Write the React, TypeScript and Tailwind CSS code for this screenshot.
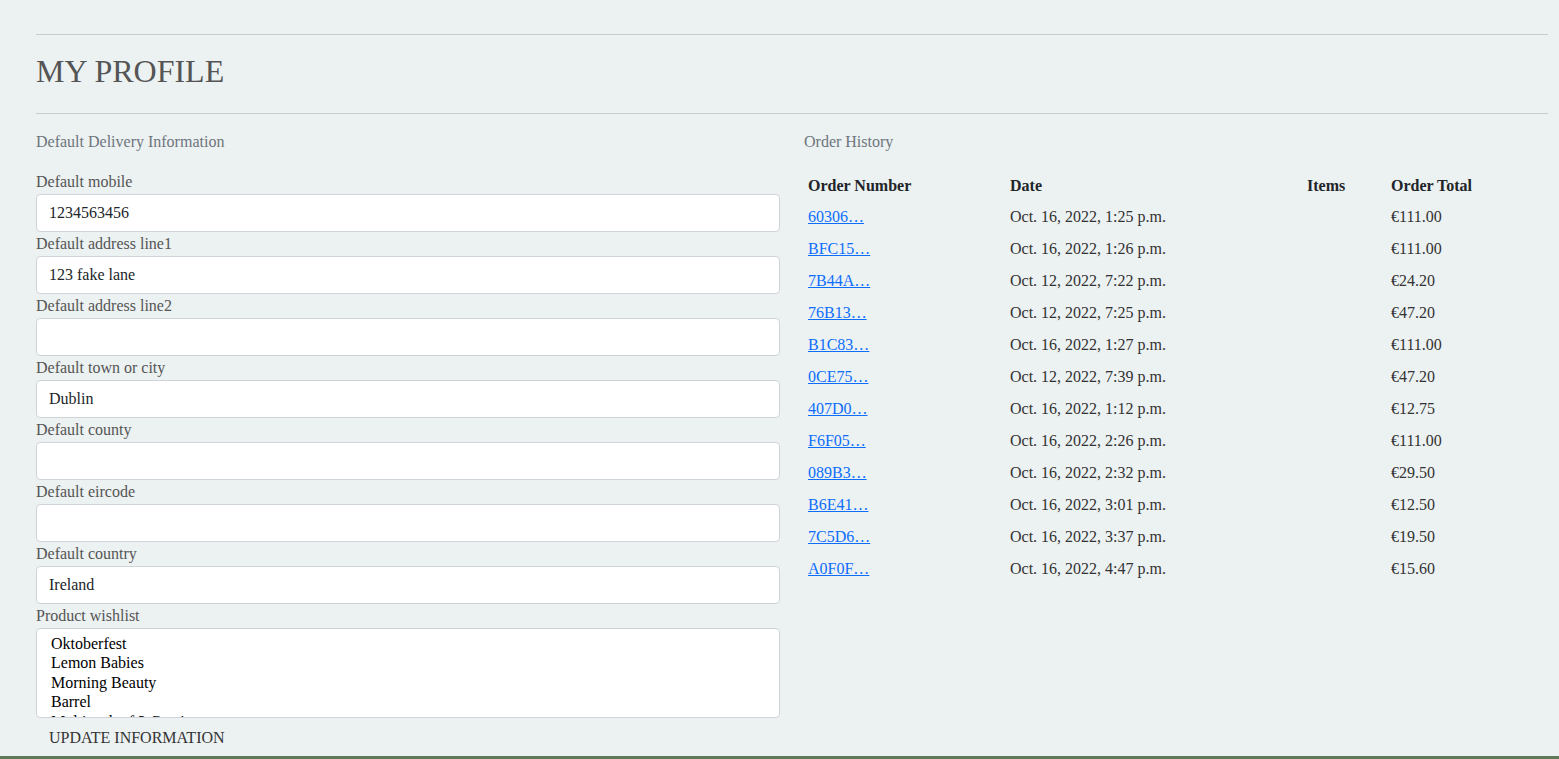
const fields = [
  { label: "Default mobile", value: "1234563456" },
  { label: "Default address line1", value: "123 fake lane" },
  { label: "Default address line2", value: "" },
  { label: "Default town or city", value: "Dublin" },
  { label: "Default county", value: "" },
  { label: "Default eircode", value: "" },
  { label: "Default country", value: "Ireland" },
];

const wishlist = [
  "Oktoberfest",
  "Lemon Babies",
  "Morning Beauty",
  "Barrel",
  "Multipack of 3 Cantina",
];

const orders = [
  { number: "60306…", date: "Oct. 16, 2022, 1:25 p.m.", total: "€111.00" },
  { number: "BFC15…", date: "Oct. 16, 2022, 1:26 p.m.", total: "€111.00" },
  { number: "7B44A…", date: "Oct. 12, 2022, 7:22 p.m.", total: "€24.20" },
  { number: "76B13…", date: "Oct. 12, 2022, 7:25 p.m.", total: "€47.20" },
  { number: "B1C83…", date: "Oct. 16, 2022, 1:27 p.m.", total: "€111.00" },
  { number: "0CE75…", date: "Oct. 12, 2022, 7:39 p.m.", total: "€47.20" },
  { number: "407D0…", date: "Oct. 16, 2022, 1:12 p.m.", total: "€12.75" },
  { number: "F6F05…", date: "Oct. 16, 2022, 2:26 p.m.", total: "€111.00" },
  { number: "089B3…", date: "Oct. 16, 2022, 2:32 p.m.", total: "€29.50" },
  { number: "B6E41…", date: "Oct. 16, 2022, 3:01 p.m.", total: "€12.50" },
  { number: "7C5D6…", date: "Oct. 16, 2022, 3:37 p.m.", total: "€19.50" },
  { number: "A0F0F…", date: "Oct. 16, 2022, 4:47 p.m.", total: "€15.60" },
];

export default function App() {
  return (
    <div className="min-h-[759px] w-full bg-[#ecf1f1] font-['Liberation_Serif',serif] text-[16px] text-[#212529]">
      <div className="h-[756px] overflow-hidden pl-[36px] pr-[11px] pt-[34px]">
        <div className="border-t border-[#c8cccc]" />
        <h2 className="mt-[17px] text-[32px] leading-[38px] text-[#555555]">
          MY PROFILE
        </h2>
        <div className="mt-[23px] border-t border-[#c8cccc]" />

        <div className="mt-[16px] flex gap-[24px]">
          {/* left column */}
          <div className="w-[744px]">
            <p className="mb-4 leading-6 text-[#6c757d]">
              Default Delivery Information
            </p>
            <form>
              {fields.map((f) => (
                <div key={f.label}>
                  <label className="block leading-6 text-[#555555]">
                    {f.label}
                  </label>
                  <input
                    type="text"
                    defaultValue={f.value}
                    className="block h-[38px] w-full rounded-[4px] border border-[#ced4da] bg-white px-[12px] leading-6 text-[#212529] outline-none"
                  />
                </div>
              ))}
              <label className="block leading-6 text-[#555555]">
                Product wishlist
              </label>
              <div className="h-[90px] overflow-hidden rounded-[4px] border border-[#ced4da] bg-white pl-[14px] pt-[5px] leading-[19.4px] text-black">
                {wishlist.map((w) => (
                  <div key={w}>{w}</div>
                ))}
              </div>
              <button
                type="button"
                className="pl-[13px] pr-[12px] py-[8px] leading-6 text-[#333333]"
              >
                UPDATE INFORMATION
              </button>
            </form>
          </div>

          {/* right column */}
          <div className="w-[744px]">
            <p className="mb-4 leading-6 text-[#6c757d]">Order History</p>
            <table className="w-full table-fixed border-collapse text-left">
              <thead>
                <tr className="h-[31px] font-bold text-[#212529]">
                  <th className="w-[202px] px-1">Order Number</th>
                  <th className="w-[297px] px-1">Date</th>
                  <th className="w-[84px] px-1">Items</th>
                  <th className="px-1">Order Total</th>
                </tr>
              </thead>
              <tbody>
                {orders.map((o) => (
                  <tr key={o.number} className="h-8 text-[#333333]">
                    <td className="px-1">
                      <a href="#" className="text-[#0d6efd] underline">
                        {o.number}
                      </a>
                    </td>
                    <td className="px-1">{o.date}</td>
                    <td className="px-1"></td>
                    <td className="px-1">{o.total}</td>
                  </tr>
                ))}
              </tbody>
            </table>
          </div>
        </div>
      </div>
      <div className="h-[3px] w-full bg-[#5f7a5a]" />
    </div>
  );
}
